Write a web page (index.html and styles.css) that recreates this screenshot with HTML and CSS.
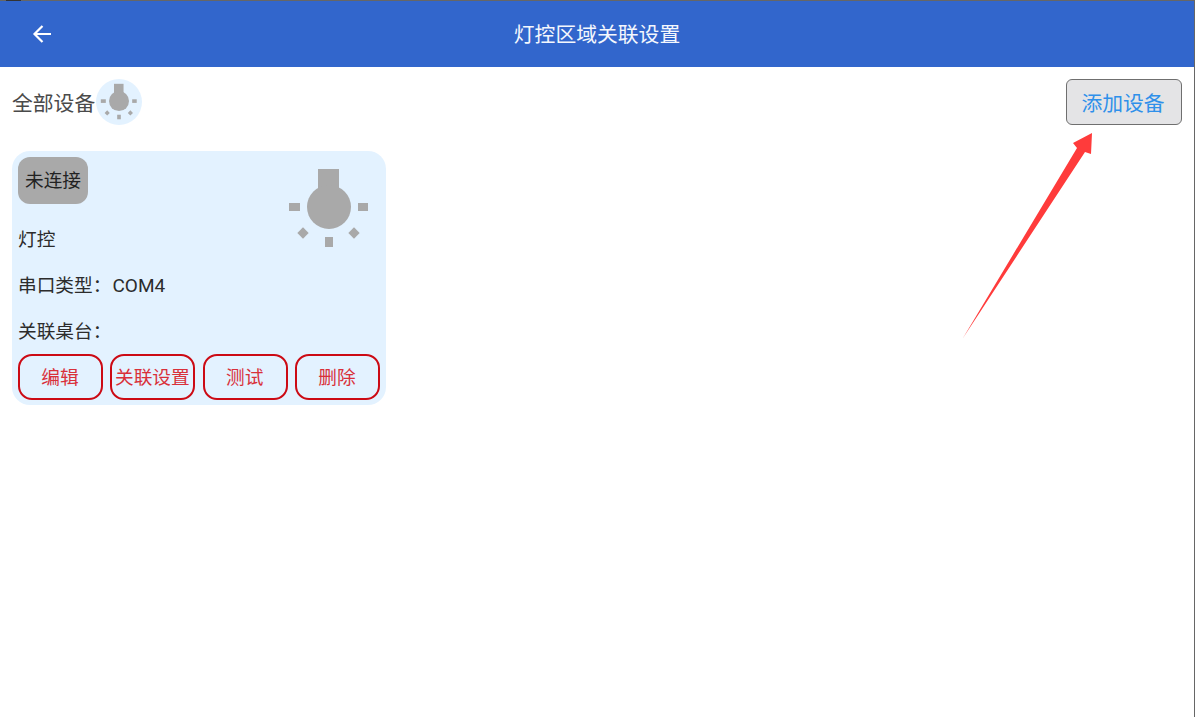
FILE: index.html
```html
<!DOCTYPE html>
<html lang="zh-CN">
<head>
    <meta charset="UTF-8" />
    <meta name="viewport" content="width=device-width, initial-scale=1" />
    <title>灯控区域关联设置</title>
    <link rel="stylesheet" href="styles.css">
</head>
<body>

<div class="frame-tab"></div>

<header class="top-bar">
    <svg class="back-icon" viewBox="0 0 24 24" width="24" height="24">
        <path d="M21 12H5M12.500 4L4.500 12l8 8" fill="none" stroke="#fff" stroke-width="2.200" />
    </svg>
    <h1>灯控区域关联设置</h1>
</header>

<main>
    <div class="tool-row">
        <div class="all-devices">
            <span>全部设备</span>
            <div class="bulb-circle">
                <svg viewBox="0 0 88 88" width="40" height="40">
                    <use href="#bulb" />
                </svg>
            </div>
        </div>
        <button class="add-btn" type="button">添加设备</button>
    </div>

    <article class="device-card">
        <div class="card-top">
            <div class="card-info">
                <div class="status-tag">未连接</div>
                <p class="info-line">灯控</p>
                <p class="info-line">串口类型：<span class="port">COM4</span></p>
                <p class="info-line">关联桌台：</p>
            </div>
            <svg class="card-bulb" viewBox="0 0 88 88" width="88" height="88">
                <defs>
                    <g id="bulb" fill="#a9a9a9">
                        <rect x="33" y="4" width="21" height="24" />
                        <circle cx="44" cy="42" r="22" />
                        <rect x="4" y="38" width="11" height="8" />
                        <rect x="73" y="38" width="10" height="8" />
                        <rect x="40" y="72" width="8" height="10" />
                        <rect x="14" y="64" width="8" height="8" transform="rotate(45 18 68)" />
                        <rect x="65" y="64" width="8" height="8" transform="rotate(45 69 68)" />
                    </g>
                </defs>
                <use href="#bulb" />
            </svg>
        </div>
        <div class="card-actions">
            <button type="button">编辑</button>
            <button type="button">关联设置</button>
            <button type="button">测试</button>
            <button type="button">删除</button>
        </div>
    </article>
</main>

<svg class="red-arrow" viewBox="0 0 1195 717" width="1195" height="717">
    <polygon points="963,338 1077,148 1073,143 1092,133 1091,154 1085,152" fill="#ff3b3b" />
</svg>

</body>
</html>
```

FILE: styles.css
```css
* {
    box-sizing: border-box;
}

body {
    font-family: "Noto Sans CJK SC", Roboto, sans-serif;
    background: #fff;
    margin: 0;
    height: 717px;
    overflow: hidden;
    border-top: 1px solid #666;
    border-right: 1px solid #666;
    color: #333;
}

.frame-tab {
    position: absolute;
    top: 0;
    left: 6px;
    width: 15px;
    height: 1px;
    background: #333;
}

.top-bar {
    height: 66px;
    background: #3266cc;
    display: flex;
    align-items: center;
    justify-content: center;
    position: relative;
}

.top-bar h1 {
    margin: 0 0 2px;
    font-size: 20.800px;
    font-weight: 400;
    color: #f4f7fd;
}

.back-icon {
    position: absolute;
    left: 30px;
    top: 21px;
}

main {
    padding: 11px 12px 0;
}

.tool-row {
    display: flex;
    justify-content: space-between;
    align-items: center;
    height: 48px;
}

.all-devices {
    display: flex;
    align-items: center;
    gap: 1px;
    font-size: 20.800px;
    color: #4a4a4a;
}

.bulb-circle {
    width: 46px;
    height: 46px;
    border-radius: 50%;
    background: #e3f2ff;
    display: flex;
    align-items: center;
    justify-content: center;
}

.add-btn {
    width: 116px;
    height: 46px;
    padding: 0 2px 0 0;
    background: #e4e4e6;
    border: 1.500px solid #6f6f6f;
    border-radius: 6px;
    color: #2f90ea;
    font-family: inherit;
    font-size: 20.800px;
}

.device-card {
    width: 374px;
    height: 254px;
    margin-top: 25px;
    padding: 6px;
    background: #e3f2ff;
    border-radius: 18px;
}

.card-top {
    display: flex;
    justify-content: space-between;
}

.status-tag {
    width: 70px;
    height: 47px;
    margin-bottom: 12px;
    background: #a9a9a9;
    border-radius: 12px;
    color: #222;
    font-size: 18.700px;
    line-height: 44px;
    text-align: center;
}

.info-line {
    margin: 0;
    height: 46px;
    line-height: 44px;
    font-size: 18.700px;
    color: #2c2c2c;
}

.port {
    font-family: Roboto, sans-serif;
    font-size: 19px;
    margin-left: 1px;
}

.card-bulb {
    margin: 8px 7px 0 0;
}

.card-actions {
    display: flex;
    justify-content: space-between;
}

.card-actions button {
    width: 85px;
    height: 46px;
    padding: 0 1px 3px 0;
    background: transparent;
    border: 2px solid #cc0a14;
    border-radius: 14px;
    color: #d9303a;
    font-family: inherit;
    font-size: 18.700px;
    white-space: nowrap;
}

.red-arrow {
    position: absolute;
    top: 0;
    left: 0;
    pointer-events: none;
}
```
